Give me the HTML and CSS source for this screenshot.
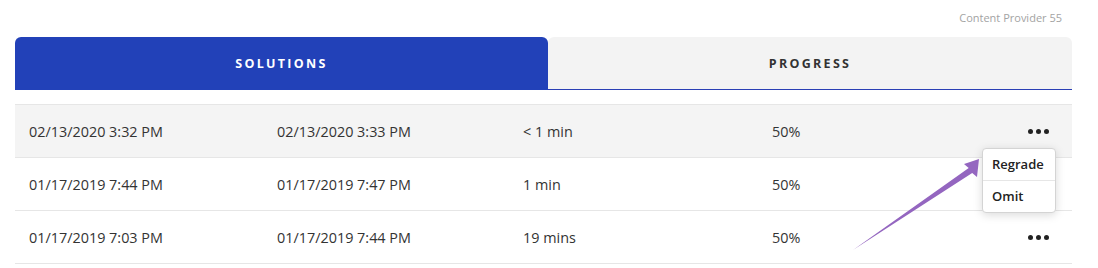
FILE: index.html
```html
<!DOCTYPE html>
<html lang="en">
<head>
    <meta charset="UTF-8">
    <meta name="viewport" content="width=device-width, initial-scale=1.0">
    <title>Attempts</title>
    <link rel="stylesheet" href="styles.css">
</head>
<body>
    <div class="page">
        <div class="provider">Content Provider 55</div>

        <div class="tabs">
            <div class="tab active">SOLUTIONS</div>
            <div class="tab">PROGRESS</div>
        </div>

        <div class="attempts">
            <div class="row highlight">
                <div class="cell">02/13/2020 3:32 PM</div>
                <div class="cell">02/13/2020 3:33 PM</div>
                <div class="cell">&lt; 1 min</div>
                <div class="cell">50%</div>
                <div class="more"><span></span><span></span><span></span></div>
            </div>
            <div class="row">
                <div class="cell">01/17/2019 7:44 PM</div>
                <div class="cell">01/17/2019 7:47 PM</div>
                <div class="cell">1 min</div>
                <div class="cell">50%</div>
                <div class="more"><span></span><span></span><span></span></div>
            </div>
            <div class="row">
                <div class="cell">01/17/2019 7:03 PM</div>
                <div class="cell">01/17/2019 7:44 PM</div>
                <div class="cell">19 mins</div>
                <div class="cell">50%</div>
                <div class="more"><span></span><span></span><span></span></div>
            </div>

            <!-- dropdown opened from the first row -->
            <div class="menu">
                <div class="menu-item">Regrade</div>
                <div class="menu-item">Omit</div>
            </div>
        </div>
    </div>

    <!-- annotation arrow -->
    <svg class="arrow" width="1098" height="268" viewBox="0 0 1098 268">
        <polygon points="853,250 968.7,168.1 964,164 979,159 977,177 972.2,172.9" fill="#9466c0"/>
    </svg>
</body>
</html>
```

FILE: styles.css
```css
body {
    margin: 0;
    background: #fff;
    font-family: 'Open Sans', 'Liberation Sans', sans-serif;
    color: #333;
}

.page {
    padding: 0 26px 0 15px;
}

.provider {
    height: 37px;
    padding-right: 10px;
    text-align: right;
    font-size: 11px;
    line-height: 35px;
    color: #a3a3a3;
}

/* Tabs */
.tabs {
    display: flex;
}

.tab {
    flex: 1;
    height: 52px;
    display: flex;
    justify-content: center;
    align-items: center;
    background: #f3f3f3;
    border-radius: 6px 6px 0 0;
    border-bottom: 1px solid #2a3fb5;
    font-size: 12.5px;
    font-weight: 700;
    letter-spacing: 2.3px;
    color: #333;
}

.tab.active {
    flex: 0 0 533px;
    background: #2241b8;
    border-bottom-color: #2241b8;
    color: #fff;
}

/* Attempts table */
.attempts {
    position: relative;
    margin-top: 14px;
    border-top: 1px solid #e6e6e6;
}

.row {
    display: grid;
    grid-template-columns: 248px 246px 249px 1fr auto;
    align-items: center;
    height: 52px;
    padding: 0 23px 0 14px;
    border-bottom: 1px solid #e6e6e6;
    font-size: 14.4px;
}

.row.highlight {
    background: #f4f4f4;
}

.more {
    display: flex;
    gap: 3px;
}

.more span {
    width: 5px;
    height: 5px;
    border-radius: 50%;
    background: #222;
}

.menu {
    position: absolute;
    top: 43px;
    right: 16px;
    width: 72px;
    background: #fff;
    border: 1px solid #d4d4d4;
    border-radius: 4px;
    box-shadow: 0 2px 10px rgba(0, 0, 0, 0.15);
}

.menu-item {
    height: 31px;
    padding-left: 9px;
    font-size: 13px;
    font-weight: 600;
    line-height: 30px;
    color: #222;
}

.menu-item + .menu-item {
    border-top: 1px solid #e6e6e6;
}

.arrow {
    position: absolute;
    top: 0;
    left: 0;
    pointer-events: none;
}
```
